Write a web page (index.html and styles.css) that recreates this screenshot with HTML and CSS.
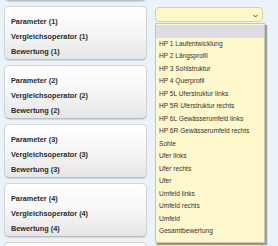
FILE: index.html
```html
<!DOCTYPE html>
<html lang="de">
<head>
<meta charset="utf-8">
<link rel="stylesheet" href="styles.css">
</head>
<body>
<div class="page">
  <div class="rows">
    <div class="row">
      <div class="card"></div>
      <div class="select"><svg class="arrow" width="5" height="4" viewBox="0 0 5 4"><path d="M0.5 1 L2.5 3 L4.5 1" fill="none" stroke="#444" stroke-width="1"/></svg></div>
    </div>
    <div class="row">
      <div class="card"><div>Parameter (1)</div><div>Vergleichsoperator (1)</div><div>Bewertung (1)</div></div>
      <div class="select"><svg class="arrow" width="5" height="4" viewBox="0 0 5 4"><path d="M0.5 1 L2.5 3 L4.5 1" fill="none" stroke="#444" stroke-width="1"/></svg></div>
    </div>
    <div class="row">
      <div class="card"><div>Parameter (2)</div><div>Vergleichsoperator (2)</div><div>Bewertung (2)</div></div>
      <div class="select"><svg class="arrow" width="5" height="4" viewBox="0 0 5 4"><path d="M0.5 1 L2.5 3 L4.5 1" fill="none" stroke="#444" stroke-width="1"/></svg></div>
    </div>
    <div class="row">
      <div class="card"><div>Parameter (3)</div><div>Vergleichsoperator (3)</div><div>Bewertung (3)</div></div>
      <div class="select"><svg class="arrow" width="5" height="4" viewBox="0 0 5 4"><path d="M0.5 1 L2.5 3 L4.5 1" fill="none" stroke="#444" stroke-width="1"/></svg></div>
    </div>
    <div class="row">
      <div class="card"><div>Parameter (4)</div><div>Vergleichsoperator (4)</div><div>Bewertung (4)</div></div>
      <div class="select"><svg class="arrow" width="5" height="4" viewBox="0 0 5 4"><path d="M0.5 1 L2.5 3 L4.5 1" fill="none" stroke="#444" stroke-width="1"/></svg></div>
    </div>
    <div class="row">
      <div class="card"></div>
      <div class="select"></div>
    </div>
  </div>
  <ul class="menu">
    <li class="sel">&nbsp;</li>
    <li>HP 1 Laufentwicklung</li>
    <li>HP 2 Längsprofil</li>
    <li>HP 3 Sohlstruktur</li>
    <li>HP 4 Querprofil</li>
    <li>HP 5L Uferstruktur links</li>
    <li>HP 5R Uferstruktur rechts</li>
    <li>HP 6L Gewässerumfeld links</li>
    <li>HP 6R Gewässerumfeld rechts</li>
    <li>Sohle</li>
    <li>Ufer links</li>
    <li>Ufer rechts</li>
    <li>Ufer</li>
    <li>Umfeld links</li>
    <li>Umfeld rechts</li>
    <li>Umfeld</li>
    <li>Gesamtbewertung</li>
  </ul>
</div>
</body>
</html>
```

FILE: styles.css
```css
html, body {
  margin: 0;
  padding: 0;
}
body {
  background: #eaf2fa;
  width: 278px;
  height: 246px;
  overflow: hidden;
  font-family: "Liberation Sans", Arial, sans-serif;
  color: #2b2b2b;
}
.page {
  position: relative;
  width: 278px;
  height: 246px;
  overflow: hidden;
}
.rows {
  display: flex;
  flex-direction: column;
  gap: 5px;
  margin-top: -53px;
  padding-left: 4px;
}
.row {
  display: flex;
  gap: 8px;
  align-items: flex-start;
}
.card {
  box-sizing: border-box;
  width: 143px;
  height: 54px;
  padding: 7px 6px 0;
  border: 1px solid #d2d4d6;
  border-bottom-color: #b9bbbd;
  border-radius: 5px;
  background: linear-gradient(#ffffff 0%, #f6f6f6 50%, #e6e6e6 100%);
  box-shadow: 0 1px 1px rgba(0,0,0,0.12);
  font-size: 7.3px;
  font-weight: bold;
  line-height: 15px;
  white-space: nowrap;
}
.select {
  box-sizing: border-box;
  position: relative;
  margin-top: 1px;
  width: 108px;
  height: 15px;
  border: 1px solid #d6cf9e;
  border-radius: 4px;
  background: #fff7c8;
}
.arrow {
  position: absolute;
  right: 4px;
  top: 6px;
}
.menu {
  position: absolute;
  left: 155px;
  top: 23px;
  width: 110px;
  box-sizing: border-box;
  margin: 0;
  padding: 1px 0 4px;
  list-style: none;
  background: #fff8cc;
  border: 1px solid #c9c6b0;
  box-shadow: 2px 2px 1px rgba(90,90,90,0.55);
  font-size: 6.6px;
  color: #333;
}
.menu li {
  height: 12.5px;
  line-height: 12.5px;
  padding-left: 3px;
  white-space: nowrap;
}
.menu li.sel {
  background: #dcdce2;
}
```
